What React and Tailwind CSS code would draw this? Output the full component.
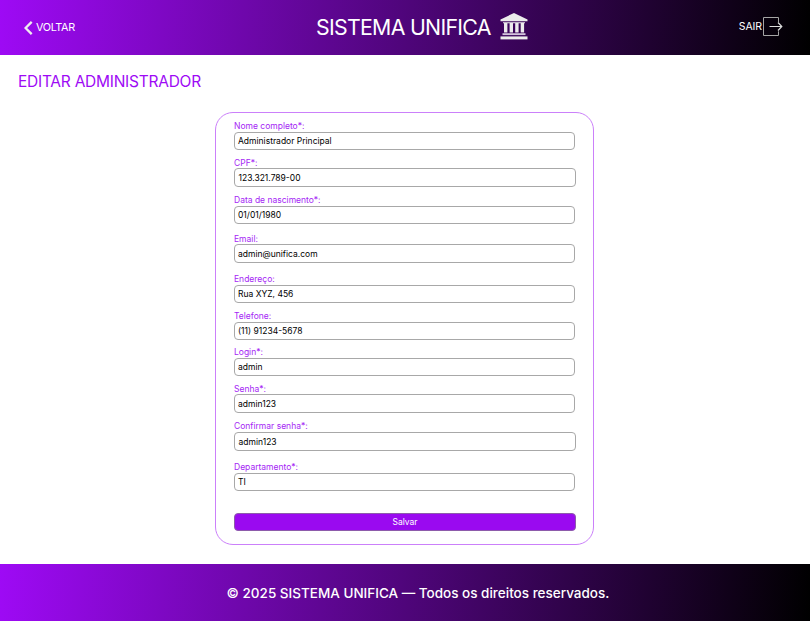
const fields = [
  { label: 'Nome completo*:', value: 'Administrador Principal', gap: 'mt-[7px]', line: 'leading-[12px]', box: 'h-[18px] w-[341px] pl-[3px]' },
  { label: 'CPF*:', value: '123.321.789-00', gap: 'mt-[6px]', line: 'leading-[14px]', box: 'h-[19px] w-[342px] pl-[3.5px]' },
  { label: 'Data de nascimento*:', value: '01/01/1980', gap: 'mt-[7px]', line: 'leading-[12px]', box: 'h-[18px] w-[341px] pl-[3px]' },
  { label: 'Email:', value: 'admin@unifica.com', gap: 'mt-[8px]', line: 'leading-[14px]', box: 'h-[19px] w-[341px] pl-[3px]' },
  { label: 'Endereço:', value: 'Rua XYZ, 456', gap: 'mt-[10px]', line: 'leading-[12px]', box: 'h-[18px] w-[341px] pl-[3px]' },
  { label: 'Telefone:', value: '(11) 91234-5678', gap: 'mt-[7px]', line: 'leading-[12px]', box: 'h-[18px] w-[341px] pl-[3px]' },
  { label: 'Login*:', value: 'admin', gap: 'mt-[6px]', line: 'leading-[12px]', box: 'h-[18px] w-[341px] pl-[3px]' },
  { label: 'Senha*:', value: 'admin123', gap: 'mt-[6px]', line: 'leading-[14px]', box: 'h-[19px] w-[341px] pl-[3px]' },
  { label: 'Confirmar senha*:', value: 'admin123', gap: 'mt-[7px]', line: 'leading-[12px]', box: 'h-[19px] w-[342px] pl-[3.5px]' },
  { label: 'Departamento*:', value: 'TI', gap: 'mt-[10px]', line: 'leading-[12px]', box: 'h-[18px] w-[341px] pl-[3px]' },
];

function Building() {
  return (
    <svg width="28" height="27" viewBox="0 0 28 27" fill="#ececec">
      <path d="M14 0 27.5 6.4V8.3H.5V6.4Z" />
      <path d="M3 9.2h22v1H3zM4 10h3.4v9.6H4zM9.6 10H13v9.6H9.600zM15.200 10h3.400v9.600h-3.400zM20.700 10h3.400v9.600h-3.400z" />
      <path d="M2.5 20.2h23v1.9h-23z" fill="#d3c4dc" />
      <path d="M.5 23.4h27v3H.5z" />
    </svg>
  );
}

function Exit() {
  return (
    <svg width="20" height="20" viewBox="0 0 20 20" fill="none" stroke="#c9c9c9" strokeWidth="1">
      <path d="M15.500 5V.5H.5v18h15v-4.200" stroke="#a5a5a5" />
      <path d="M6.5 9.5H18.5M15 5.5 18.8 9.5 15 13.5" stroke="#dcdcdc" strokeWidth="1.2" />
    </svg>
  );
}

export default function App() {
  return (
    <div className="flex h-[621px] w-[810px] flex-col overflow-hidden bg-white font-['Inter',sans-serif]">
      <header className="grid h-[55px] shrink-0 grid-cols-[316px_auto_1fr] items-center bg-[linear-gradient(94deg,#9e0af5_0%,#000_100%)] text-white">
        <a className="flex items-center gap-[3px] pl-[24px] text-[10.8px] leading-[13px] tracking-[-0.35px]">
          <svg width="9" height="14" viewBox="0 0 9 14" fill="none" stroke="#eee" strokeWidth="2.3">
            <path d="M7.700.9 1.600 7l6.100 6.100" />
          </svg>
          VOLTAR
        </a>
        <div className="flex items-center gap-[8px] pb-[2px]">
          <h1 className="w-[176px] whitespace-nowrap pt-[2px] text-[21.3px] font-normal leading-none tracking-[-0.7px]">SISTEMA UNIFICA</h1>
          <Building />
        </div>
        <a className="flex items-center justify-end gap-[1px] pb-[2px] pr-[27px] text-[10.5px] leading-[13px] tracking-[-0.1px]">
          SAIR
          <Exit />
        </a>
      </header>
      <main className="flex-1">
        <h2 className="h-[57px] pl-[18px] pt-[17px] text-[15.5px] font-normal leading-[20px] tracking-[-0.25px] text-[#9e0af5]">EDITAR ADMINISTRADOR</h2>
        <form className="ml-[215px] flex h-[433px] w-[379px] flex-col rounded-[18px] border border-[#cb80fa] px-[18px]">
          {fields.map((field) => (
            <label key={field.label} className={field.gap}>
              <span className={`block h-[12px] whitespace-nowrap text-[8.5px] text-[#a526f5] ${field.line}`}>{field.label}</span>
              <span className={`flex items-center rounded-[4px] border border-[#a8a8a8] text-[8.5px] leading-[12px] text-black ${field.box}`}>{field.value}</span>
            </label>
          ))}
          <button type="button" className="mt-[21.5px] h-[18px] w-[342px] shrink-0 rounded-[4px] border border-[#8d5bab] bg-[#9a0af0] text-[8.5px] leading-[12px] text-white">Salvar</button>
        </form>
      </main>
      <footer className="flex h-[57px] shrink-0 items-center justify-center bg-[linear-gradient(94deg,#9e0af5_0%,#000_100%)] pl-[26px] pt-[2px] text-[13.5px] font-medium text-white">
        © 2025 SISTEMA UNIFICA — Todos os direitos reservados.
      </footer>
    </div>
  );
}
